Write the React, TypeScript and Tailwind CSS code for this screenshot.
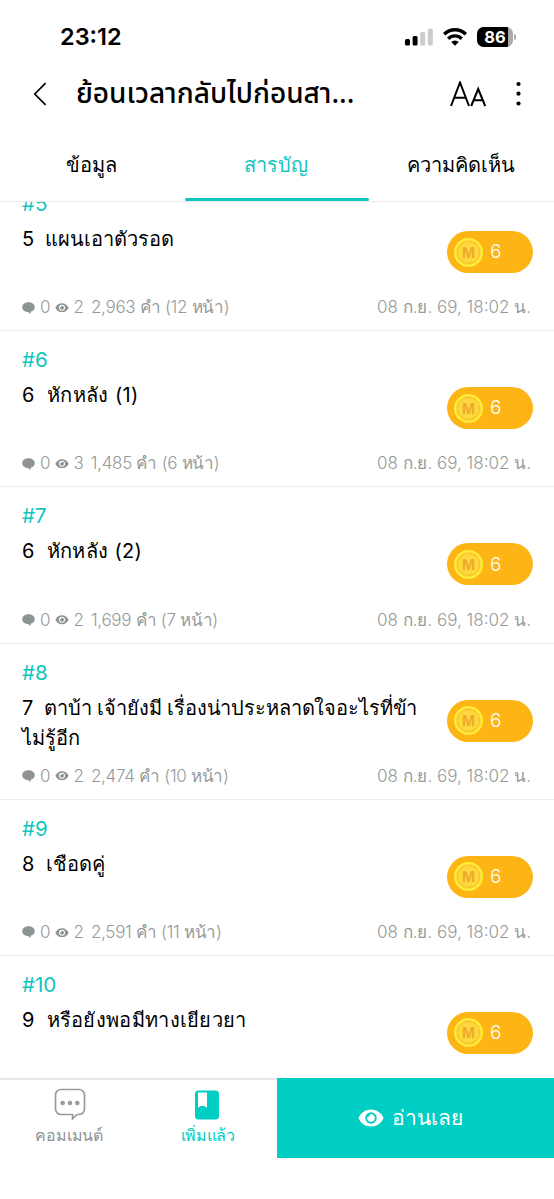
import React from 'react';

const chapters = [
  { no: 5, title: '5  แผนเอาตัวรอด', tracking: 'tracking-normal', views: 2, words: '2,963', pages: 12 },
  { no: 6, title: '6  หักหลัง (1)', tracking: 'tracking-[0.4px]', views: 3, words: '1,485', pages: 6 },
  { no: 7, title: '6  หักหลัง (2)', tracking: 'tracking-[0.35px]', views: 2, words: '1,699', pages: 7 },
  {
    no: 8,
    title: '7  ตาบ้า เจ้ายังมี เรื่องน่าประหลาดใจอะไรที่ข้า\nไม่รู้อีก',
    tracking: 'tracking-[-0.12px]',
    views: 2,
    words: '2,474',
    pages: 10,
  },
  { no: 9, title: '8  เชือดคู่', tracking: 'tracking-normal', views: 2, words: '2,591', pages: 11 },
  { no: 10, title: '9  หรือยังพอมีทางเยียวยา', tracking: 'tracking-[0.3px]' },
];

function EyeIcon({ className }: { className: string }) {
  return (
    <svg viewBox="0 0 26 18" className={className} fill="currentColor">
      <path
        fillRule="evenodd"
        d="M13 0.5C7.2 0.5 2.6 4 0.4 9C2.6 14 7.2 17.5 13 17.5S23.4 14 25.6 9C23.4 4 18.8 0.5 13 0.5ZM13 3.3A5.7 5.7 0 1 1 13 14.7A5.7 5.7 0 1 1 13 3.3Z"
      />
      <path d="M13 5.2a3.8 3.8 0 1 1-3.8 3.8c0-.5.1-.9.3-1.3a1.9 1.9 0 0 0 2.3-2.3c.4-.1.8-.2 1.2-.2Z" />
    </svg>
  );
}

function StatusBar() {
  return (
    <div className="flex h-[66px] items-center justify-between pt-2 pl-[60px] pr-[38px]">
      <span className="text-[23.5px] font-semibold leading-7">23:12</span>
      <div className="flex items-center">
        <svg width="28" height="18" viewBox="0 0 28 18">
          <rect x="0" y="11" width="5" height="6.5" rx="1.5" />
          <rect x="7.6" y="8" width="5" height="9.5" rx="1.5" />
          <rect x="15.2" y="4" width="5" height="13.5" rx="1.5" fill="#cccccc" />
          <rect x="22.8" y="0.5" width="5" height="17" rx="1.5" fill="#cccccc" />
        </svg>
        <svg width="24" height="18" viewBox="0 0 24 18" className="ml-[10.5px]" fill="none" stroke="#000" strokeWidth="3.4">
          <path d="M1.2 6.3a15.2 15.2 0 0 1 21.6 0" />
          <path d="M5.2 10.7a9.5 9.5 0 0 1 13.6 0" />
          <path d="M8.2 14a5.3 5.3 0 0 1 7.6 0L12 17.7Z" fill="#000" stroke="none" />
        </svg>
        <div className="ml-[10px] flex h-5 w-[36px] items-center justify-center rounded-[6.5px] bg-[linear-gradient(90deg,#000_86%,#aaa_86%)]">
          <span className="text-[16.5px] font-bold leading-5 text-white">86</span>
        </div>
        <div className="ml-[1px] h-[6px] w-[2px] rounded-r bg-[#aaa]"></div>
      </div>
    </div>
  );
}

function Header() {
  return (
    <div className="flex h-[64px] items-center pb-2 pl-[33px] pr-[33px]">
      <svg width="14" height="24" viewBox="0 0 14 24" fill="none" stroke="#000" strokeWidth="1.7">
        <path d="M12.6 1.2 1.8 12l10.8 10.8" />
      </svg>
      <h1 className="ml-[29px] flex-1 whitespace-nowrap pt-[2px] font-['Noto_Sans_Thai','Noto_Sans',sans-serif] text-[28px] font-medium leading-10">
        ย้อนเวลากลับไปก่อนสา...
      </h1>
      <svg width="36" height="26" viewBox="0 0 36 26" fill="none" stroke="#000" strokeWidth="2">
        <path d="M1 25 10 1.5l9 23.5M4 16.8h12M21.2 25l7-17 7 17M23.5 19.3h9.6" />
      </svg>
      <svg width="5" height="26" viewBox="0 0 5 26" className="ml-[30px]">
        <circle cx="2.5" cy="3" r="2.1" />
        <circle cx="2.5" cy="12.7" r="2.1" />
        <circle cx="2.5" cy="22.5" r="2.1" />
      </svg>
    </div>
  );
}

function Tabs() {
  return (
    <div className="grid h-[72px] grid-cols-3 border-b border-[#ececec] text-center text-[20px] leading-[70px]">
      <div className="pr-[2px]">ข้อมูล</div>
      <div className="relative text-[#12c5bd]">
        <span className="pr-[2px]">สารบัญ</span>
        <div className="absolute inset-x-0 bottom-0 h-[3px] rounded-full bg-[#12c5bd]"></div>
      </div>
      <div className="pr-px">ความคิดเห็น</div>
    </div>
  );
}

function CoinBadge() {
  return (
    <div className="flex h-[42px] w-[86px] items-center rounded-full bg-[#fdb515] pl-[7px] text-white">
      <div className="flex size-[29px] items-center justify-center rounded-full border-2 border-[#ffed35] bg-[#ffd83c]">
        <div className="flex size-[23px] items-center justify-center rounded-full border border-[#f3bd30] text-[14px] font-bold text-[#eeab2b]">
          M
        </div>
      </div>
      <span className="ml-[7px] pt-px text-[19px] font-light">6</span>
    </div>
  );
}

function Chapter({ chapter }: { chapter: (typeof chapters)[number] }) {
  return (
    <div className="flex h-[156.2px] shrink-0 flex-col border-b border-[#ececec] pl-[22px] pr-[21px]">
      <div className="flex h-[119px] justify-between">
        <div className="pt-[15px]">
          <div className="text-[20.5px] leading-7 text-[#12c5bd]">#{chapter.no}</div>
          <div className={`mt-[6px] whitespace-pre text-[20px] leading-[30px] ${chapter.tracking}`}>{chapter.title}</div>
        </div>
        <div className="pt-[56px]">
          <CoinBadge />
        </div>
      </div>
      {chapter.words && (
        <div className="flex h-[28px] items-center whitespace-nowrap text-[17px] font-light text-[#959a9a]">
          <svg width="13" height="12" viewBox="0 0 13 12" className="mb-px" fill="#8e9494">
            <path d="M6.5 0.3C3 .3.2 2.4.2 5.2c0 2.600 2.600 4.700 5.800 4.800.5 0 1 1.400 2.700 1.800.2-.7-.1-1.500.3-2.200 2.200-.7 3.800-2.300 3.800-4.400C12.800 2.400 10 .3 6.500.3Z" />
          </svg>
          <span className="ml-[5px]">0</span>
          <EyeIcon className="mb-px ml-[4.5px] h-[9.5px] w-[14px] text-[#8e9494]" />
          <span className="ml-[4.5px]">{chapter.views}</span>
          <span className="ml-[7px] tracking-[-0.3px]">
            {chapter.words} คำ ({chapter.pages} หน้า)
          </span>
          <span className="ml-auto pr-[2px]">08 ก.ย. 69, 18:02 น.</span>
        </div>
      )}
    </div>
  );
}

function BottomBar() {
  return (
    <div className="flex h-[121px] items-start">
      <div className="flex h-20 w-1/2 border-t-2 border-[#e8e8e8] text-[16px] font-light">
        <div className="flex flex-1 flex-col items-center pt-[8px] text-[#8e9494]">
          <svg width="32" height="33" viewBox="0 0 32 33" className="ml-[2px]" fill="none" stroke="#9b9b9b" strokeWidth="1.7">
            <path d="M7 1.5h18a5.5 5.5 0 0 1 5.5 5.5v14a5.5 5.5 0 0 1-5.5 5.5h-2l-4.500 4.200V26.500H7A5.500 5.500 0 0 1 1.500 21V7A5.500 5.500 0 0 1 7 1.500Z" />
            <g fill="#9b9b9b" stroke="none">
              <circle cx="8.7" cy="15" r="2.3" />
              <circle cx="16" cy="15" r="2.3" />
              <circle cx="23.3" cy="15" r="2.3" />
            </g>
          </svg>
          <span className="mt-[2px] leading-6 tracking-[-0.2px]">คอมเมนต์</span>
        </div>
        <div className="flex flex-1 flex-col items-center pt-[8px] text-[#00cdc3]">
          <svg width="24" height="33" viewBox="0 0 24 33" className="mr-px">
            <rect y="2.5" width="24" height="29" rx="3.5" fill="#00cdc3" />
            <path d="M3 4.500h9v15.200q-4.500-3.800-9 0Z" fill="#fff" />
          </svg>
          <span className="mt-[2px] leading-6 tracking-[-0.3px]">เพิ่มแล้ว</span>
        </div>
      </div>
      <div className="flex h-20 w-1/2 items-center justify-center bg-[#00cdc3] pr-[10px] text-[21px] text-white">
        <EyeIcon className="h-[18px] w-[26px]" />
        <span className="ml-2">อ่านเลย</span>
      </div>
    </div>
  );
}

export default function App() {
  return (
    <div className="flex h-[1199px] w-[554px] flex-col overflow-hidden bg-white font-['Inter','Noto_Sans',sans-serif] text-black">
      <StatusBar />
      <Header />
      <Tabs />
      <div className="flex-1 overflow-hidden">
        <div className="-mt-[27px] flex flex-col">
          {chapters.map((chapter) => (
            <Chapter key={chapter.no} chapter={chapter} />
          ))}
        </div>
      </div>
      <BottomBar />
    </div>
  );
}
